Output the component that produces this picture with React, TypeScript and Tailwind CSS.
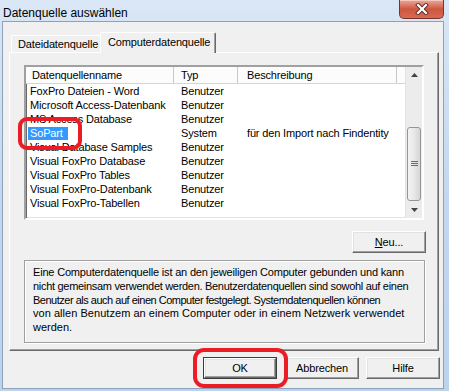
import React from "react";

const rows: [string, string, string][] = [
  ["FoxPro Dateien - Word", "Benutzer", ""],
  ["Microsoft Access-Datenbank", "Benutzer", ""],
  ["MS Access Database", "Benutzer", ""],
  ["SoPart", "System", "für den Import nach Findentity"],
  ["Visual Database Samples", "Benutzer", ""],
  ["Visual FoxPro Database", "Benutzer", ""],
  ["Visual FoxPro Tables", "Benutzer", ""],
  ["Visual FoxPro-Datenbank", "Benutzer", ""],
  ["Visual FoxPro-Tabellen", "Benutzer", ""],
];

function ClassicButton({
  children,
  isDefault,
}: {
  children: React.ReactNode;
  isDefault?: boolean;
}) {
  return (
    <div
      className={
        "w-[74px] h-[22px] flex " +
        (isDefault ? "border border-[#3c3c3c]" : "")
      }
    >
      <div className="flex-1 flex items-center justify-center bg-[#f0f0f0] border-t border-l border-t-white border-l-white border-r border-b border-r-[#696969] border-b-[#696969] shadow-[inset_-1px_-1px_0_#a0a0a0,inset_1px_1px_0_#e3e3e3]">
        {children}
      </div>
    </div>
  );
}

export default function App() {
  return (
    <div className="w-[449px] h-[391px] relative overflow-hidden bg-gradient-to-b from-[#d9e7f6] via-[#c3d7ee] to-[#bdd3ec] font-['Liberation_Sans',Arial,sans-serif] text-[11px] text-black">
      {/* Title bar */}
      <div className="h-[22px] flex items-start">
        <span className="ml-[3px] mt-[6px] text-[12px] leading-[14px] text-black">
          Datenquelle auswählen
        </span>
        <div className="ml-auto mr-[5px] w-[45px] h-[19px] rounded-b-[5px] border border-t-0 border-[#7a3328] bg-gradient-to-b from-[#e9a99a] via-[#cf5640] to-[#d66a52] flex items-center justify-center shadow-[inset_0_1px_0_#f4c9bf]">
          <svg width="14" height="12" viewBox="0 0 14 12">
            <path d="M3 2 L11 10 M11 2 L3 10" stroke="#5a2a22" strokeWidth="4" strokeLinecap="square" />
            <path d="M3 2 L11 10 M11 2 L3 10" stroke="#ffffff" strokeWidth="2.2" strokeLinecap="square" />
          </svg>
        </div>
      </div>

      {/* Client area */}
      <div className="ml-[3px] w-[440px] h-[366px] bg-[#f0f0f0] shadow-[0_0_0_1px_#8da2ba] pt-[10px] tracking-[-0.15px]">
        {/* Tabs */}
        <div className="ml-[6px] h-[20px] flex items-end pl-[2px] relative z-10">
          <div className="w-[91px] h-[17px] border-t border-l border-white border-r border-r-[#a0a0a0] rounded-tl-[2px] flex items-center pl-[6px]">
            <span className="leading-[13px]">Dateidatenquelle</span>
          </div>
          <div className="-ml-[2px] w-[116px] h-[21px] -mb-[1px] bg-[#f0f0f0] border-t border-l border-white border-r border-r-[#696969] shadow-[inset_-1px_0_0_#a0a0a0] rounded-tl-[2px] rounded-tr-[2px] flex items-start pt-[3px] pl-[7px]">
            <span className="leading-[13px]">Computerdatenquelle</span>
          </div>
        </div>

        {/* Tab panel */}
        <div className="ml-[6px] w-[430px] h-[299px] border-t border-l border-white border-r border-b border-r-[#696969] border-b-[#696969] shadow-[inset_-1px_-1px_0_#a0a0a0] pl-[14px] pt-[12px]">
          {/* List view */}
          <div className="w-[400px] h-[155px] border-2 border-t-[#a0a0a0] border-l-[#a0a0a0] border-r-white border-b-white shadow-[inset_1px_1px_0_#696969,inset_-1px_-1px_0_#e3e3e3] bg-white flex">
            <div className="w-[379px] h-[151px] flex flex-col">
              {/* Header */}
              <div className="h-[17px] flex bg-[#fcfcfc] border-b border-[#d5d5d5]">
                <div className="w-[148px] border-r border-[#c8c8c8] pl-[6px] flex items-center">
                  Datenquellenname
                </div>
                <div className="w-[64px] border-r border-[#c8c8c8] pl-[7px] flex items-center">
                  Typ
                </div>
                <div className="w-[159px] border-r border-[#c8c8c8] pl-[9px] flex items-center">
                  Beschreibung
                </div>
                <div className="flex-1" />
              </div>
              {/* Rows */}
              {rows.map((r, i) => (
                <div key={i} className="h-[14px] flex items-center leading-[13px]">
                  <div className="w-[148px] pl-[2px] whitespace-nowrap">
                    {r[0] === "SoPart" ? (
                      <span className="bg-[#3399ff] text-white px-[2px] pr-[5px] inline-block leading-[13px]">
                        {r[0]}
                      </span>
                    ) : (
                      <span className="pl-[2px]">{r[0]}</span>
                    )}
                  </div>
                  <div className="w-[64px] pl-[7px] whitespace-nowrap">{r[1]}</div>
                  <div className="w-[159px] pl-[9px] whitespace-nowrap">{r[2]}</div>
                </div>
              ))}
            </div>
            {/* Scrollbar */}
            <div className="w-[17px] h-[151px] bg-[#ececec] flex flex-col border-l border-[#e2e2e2]">
              <div className="h-[17px] flex items-center justify-center">
                <svg width="7" height="4" viewBox="0 0 7 4">
                  <path d="M0 4 L3.5 0 L7 4 Z" fill="#444" />
                </svg>
              </div>
              <div className="h-[43px]" />
              <div className="h-[75px] mx-[1px] rounded-[3px] border border-[#959595] bg-gradient-to-r from-[#f3f3f3] via-[#e8e8e8] to-[#d6d6d6] flex items-center justify-center">
                <svg width="7" height="6" viewBox="0 0 7 6">
                  <path d="M0 0.5 H7 M0 2.5 H7 M0 4.5 H7" stroke="#6b6b6b" strokeWidth="1" />
                </svg>
              </div>
              <div className="flex-1" />
              <div className="h-[17px] flex items-center justify-center">
                <svg width="7" height="4" viewBox="0 0 7 4">
                  <path d="M0 0 L7 0 L3.5 4 Z" fill="#444" />
                </svg>
              </div>
            </div>
          </div>

          {/* Neu button */}
          <div className="w-[402px] mt-[11px] flex justify-end">
            <ClassicButton>
              <span>
                <span className="underline">N</span>eu...
              </span>
            </ClassicButton>
          </div>

          {/* Info box */}
          <div className="w-[401px] h-[83px] mt-[7px] border border-[#a0a0a0] shadow-[1px_1px_0_#ffffff,inset_1px_1px_0_#ffffff] pl-[8px] pt-[5px] leading-[13.75px] whitespace-nowrap">
            <div className="tracking-[-0.18px]">Eine Computerdatenquelle ist an den jeweiligen Computer gebunden und kann</div>
            <div className="tracking-[-0.3px]">nicht gemeinsam verwendet werden. Benutzerdatenquellen sind sowohl auf einen</div>
            <div className="tracking-[-0.49px]">Benutzer als auch auf einen Computer festgelegt. Systemdatenquellen können</div>
            <div className="tracking-[0.04px]">von allen Benutzem an einem Computer oder in einem Netzwerk verwendet</div>
            <div className="tracking-[0px]">werden.</div>
          </div>
        </div>

        {/* Bottom buttons */}
        <div className="mt-[6px] flex justify-end pr-[3px]">
          <ClassicButton isDefault>OK</ClassicButton>
          <div className="w-[8px]" />
          <ClassicButton>Abbrechen</ClassicButton>
          <div className="w-[7px]" />
          <ClassicButton>Hilfe</ClassicButton>
        </div>
      </div>

      {/* Red annotations */}
      <div className="absolute left-[18px] top-[117px] w-[64px] h-[33px] border-[4px] border-[#ec1c24] rounded-[9px]" />
      <div className="absolute left-[193px] top-[348px] w-[95px] h-[40px] border-[4px] border-[#ec1c24] rounded-[11px]" />
    </div>
  );
}
